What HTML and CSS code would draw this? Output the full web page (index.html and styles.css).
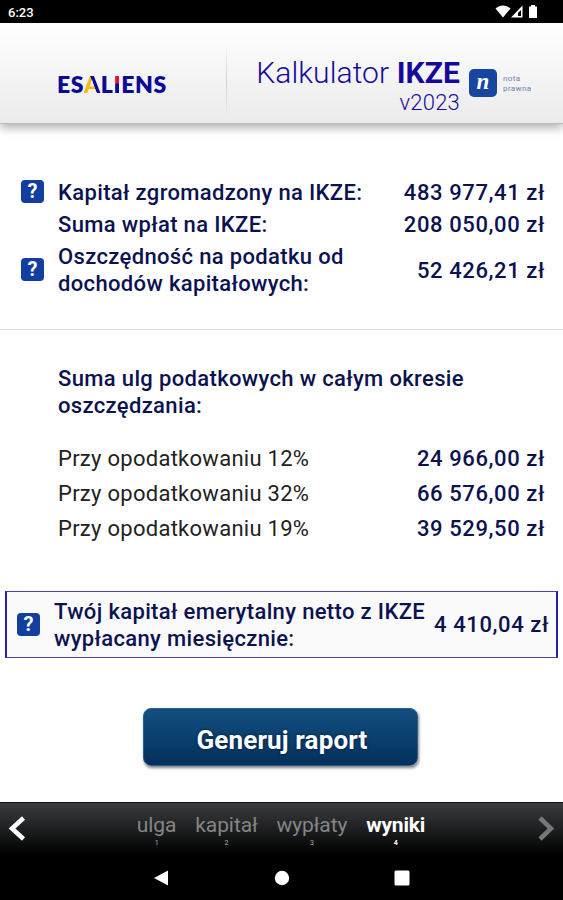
FILE: index.html
```html
<!DOCTYPE html>
<html lang="pl">
<head>
    <meta charset="UTF-8">
    <meta name="viewport" content="width=device-width, initial-scale=1.0">
    <title>Kalkulator IKZE</title>
    <link rel="stylesheet" href="styles.css">
</head>
<body>
    <div class="status-bar">
        <span class="clock">6:23</span>
        <svg class="status-icons" width="44" height="16" viewBox="0 0 44 16">
            <path d="M0.500 4.500C5 0.500 11 0.500 15.500 4.500L8 13.500z" fill="#fff"/>
            <path d="M27.500 1.500V13.500H16z" fill="#fff"/>
            <path d="M26 6V12H23V9z" fill="#000"/>
            <path d="M34 2.500h2V1h4v1.500h2V14h-8z" fill="#fff"/>
        </svg>
    </div>

    <header class="header">
        <div class="logo">ES<span class="logo-a">A</span>L<span class="logo-i">I</span>ENS</div>
        <div class="title">
            <h1>Kalkulator <b>IKZE</b></h1>
            <div class="version">v2023</div>
        </div>
        <div class="note">
            <span class="note-icon">n</span>
            <span class="note-text">nota<br>prawna</span>
        </div>
    </header>

    <main>
        <section class="summary">
            <div class="row">
                <span class="help">?</span>
                <span class="label">Kapitał zgromadzony na IKZE:</span>
                <span class="value">483 977,41 zł</span>
            </div>
            <div class="row">
                <span></span>
                <span class="label">Suma wpłat na IKZE:</span>
                <span class="value">208 050,00 zł</span>
            </div>
            <div class="row">
                <span class="help">?</span>
                <span class="label">Oszczędność na podatku od<br>dochodów kapitałowych:</span>
                <span class="value">52 426,21 zł</span>
            </div>
        </section>

        <section class="reliefs">
            <h2>Suma ulg podatkowych w całym okresie<br>oszczędzania:</h2>
            <div class="relief">
                <span class="rate">Przy opodatkowaniu 12%</span>
                <span class="value">24 966,00 zł</span>
            </div>
            <div class="relief">
                <span class="rate">Przy opodatkowaniu 32%</span>
                <span class="value">66 576,00 zł</span>
            </div>
            <div class="relief">
                <span class="rate">Przy opodatkowaniu 19%</span>
                <span class="value">39 529,50 zł</span>
            </div>
        </section>

        <div class="pension">
            <span class="help">?</span>
            <span class="label">Twój kapitał emerytalny netto z IKZE<br>wypłacany miesięcznie:</span>
            <span class="value">4 410,04 zł</span>
        </div>

        <button class="report-btn">Generuj raport</button>
    </main>

    <nav class="steps">
        <svg class="arrow" width="18" height="26" viewBox="0 0 18 26">
            <path d="M15.500 2L4 12.500L15.500 23" fill="none" stroke="#fff" stroke-width="4.500"/>
        </svg>
        <div class="step-list">
            <div class="step">ulga<small>1</small></div>
            <div class="step">kapitał<small>2</small></div>
            <div class="step">wypłaty<small>3</small></div>
            <div class="step active">wyniki<small>4</small></div>
        </div>
        <svg class="arrow" width="18" height="26" viewBox="0 0 18 26">
            <path d="M3 2L14 12.500L3 23" fill="none" stroke="#777" stroke-width="4.500"/>
        </svg>
    </nav>

    <div class="system-nav">
        <svg width="16" height="16" viewBox="0 0 16 16"><path d="M0 8L14 0.500V15.500z" fill="#fff"/></svg>
        <svg width="16" height="16" viewBox="0 0 16 16"><circle cx="8" cy="8" r="7.200" fill="#fff"/></svg>
        <svg width="16" height="16" viewBox="0 0 16 16"><rect x="0.500" y="0.500" width="15" height="15" rx="1.500" fill="#fff"/></svg>
    </div>
</body>
</html>
```
FILE: styles.css
```css
* {
    box-sizing: border-box;
}
body {
    margin: 0;
    height: 900px;
    display: flex;
    flex-direction: column;
    font-family: Roboto, "Liberation Sans", sans-serif;
    background: #fff;
    color: #0b1250;
    overflow: hidden;
}
.status-bar {
    height: 23px;
    display: flex;
    justify-content: space-between;
    padding: 4px 24px 0 8px;
    background: #000;
    color: #fff;
}
.clock {
    font-size: 13px;
    line-height: 17px;
    font-weight: 500;
}
.header {
    height: 101px;
    display: flex;
    background: linear-gradient(#fff, #ebebeb);
    border-bottom: 1px solid #bbb;
    box-shadow: 0 4px 9px rgba(0,0,0,0.3);
}
.logo {
    width: 227px;
    padding: 48px 0 0 57px;
    border-right: 1px solid;
    border-image: linear-gradient(transparent 20%, #d0d0d0 60%, transparent 95%) 1;
    font-family: Lato, sans-serif;
    font-size: 23px;
    line-height: 26px;
    font-weight: 800;
    letter-spacing: 0.6px;
    color: #0a0a96;
}
.logo-a, .logo-i {
    color: transparent;
    -webkit-background-clip: text;
    background-clip: text;
}
.logo-a {
    background-image: linear-gradient(68deg, #fdb913 52%, #0a0a96 54%);
}
.logo-i {
    background-image: linear-gradient(#e8112d 46%, #0a0a96 50%);
}
.title {
    width: 233px;
    padding-top: 33px;
    text-align: right;
    color: #150a9c;
    white-space: nowrap;
}
h1 {
    margin: 0;
    font-size: 30px;
    line-height: 34px;
    font-weight: 350;
    letter-spacing: 0.1px;
}
h1 b {
    font-weight: 700;
}
.version {
    font-size: 22px;
    line-height: 26px;
    font-weight: 350;
    letter-spacing: 0.2px;
}
.note {
    display: flex;
    align-items: flex-start;
    padding: 46px 0 0 9px;
}
.note-icon {
    width: 28px;
    height: 28px;
    border-radius: 5px;
    background: #1746a0;
    color: #fff;
    font: italic bold 23px/26px "Liberation Serif", serif;
    text-align: center;
}
.note-text {
    padding: 5px 0 0 6px;
    font-size: 8px;
    line-height: 10px;
    letter-spacing: 0.4px;
    color: #6d83ac;
}
.label, .value, h2 {
    font-size: 22px;
    line-height: 27px;
    font-weight: 500;
    letter-spacing: 0.35px;
    white-space: nowrap;
}
.value {
    letter-spacing: 0.6px;
}
.help {
    width: 23px;
    height: 23px;
    flex-shrink: 0;
    border-radius: 4px;
    background: #123f9f;
    color: #fff;
    font-size: 20px;
    line-height: 23px;
    font-weight: 700;
    text-align: center;
}
main {
    height: 678px;
    display: flex;
    flex-direction: column;
}
.summary {
    height: 206px;
    display: flex;
    flex-direction: column;
    gap: 5px;
    padding: 55px 18px 0 21px;
    border-bottom: 1px solid #e2e2e2;
}
.row {
    display: grid;
    grid-template-columns: 37px 1fr auto;
    align-items: center;
}
.row .help {
    margin-bottom: 2px;
}
.reliefs {
    padding: 35px 18px 0 58px;
}
h2 {
    margin: 0 0 22px;
}
.relief {
    height: 35px;
    display: flex;
    justify-content: space-between;
    align-items: center;
}
.rate {
    font-size: 22px;
    letter-spacing: 0.27px;
    color: #222;
    font-weight: 400;
}
.pension {
    height: 67px;
    display: flex;
    align-items: center;
    margin: 45px 5px 0 5px;
    padding: 0 7px 0 10px;
    background: #fafafb;
    border: 2px solid #2a1fa8;
    border-top: 1px solid #4a42ae;
    border-bottom: 1px solid #4a42ae;
}
.pension .label {
    flex: 1;
    padding-left: 14px;
}
.report-btn {
    width: 275px;
    height: 58px;
    margin: 50px 0 0 143px;
    padding: 5px 0 0 3px;
    border: 1px solid #2d5f8b;
    border-radius: 8px;
    background: linear-gradient(#124f80, #03305c);
    box-shadow: 1px 2px 3px rgba(0,0,0,0.5);
    color: #fff;
    font-family: inherit;
    font-size: 26px;
    font-weight: 700;
    letter-spacing: 0.15px;
    text-shadow: 0 0 3px #001838;
}
.steps {
    height: 53px;
    display: flex;
    justify-content: space-between;
    padding: 13px 8px 0;
    background: linear-gradient(#3a3d40, #000);
    border-top: 1px solid #111;
}
.step-list {
    display: flex;
    gap: 19px;
    padding-right: 1px;
}
.step {
    font-size: 21px;
    line-height: 18px;
    letter-spacing: -0.1px;
    color: #858585;
    text-align: center;
}
.step small {
    display: block;
    font-size: 7px;
    line-height: 18px;
    color: #aaa;
}
.step.active, .step.active small {
    color: #fff;
    font-weight: 700;
}
.step.active {
    letter-spacing: -0.2px;
}
.system-nav {
    height: 45px;
    display: flex;
    justify-content: center;
    gap: 104px;
    padding-top: 15px;
    background: #000;
}
```
